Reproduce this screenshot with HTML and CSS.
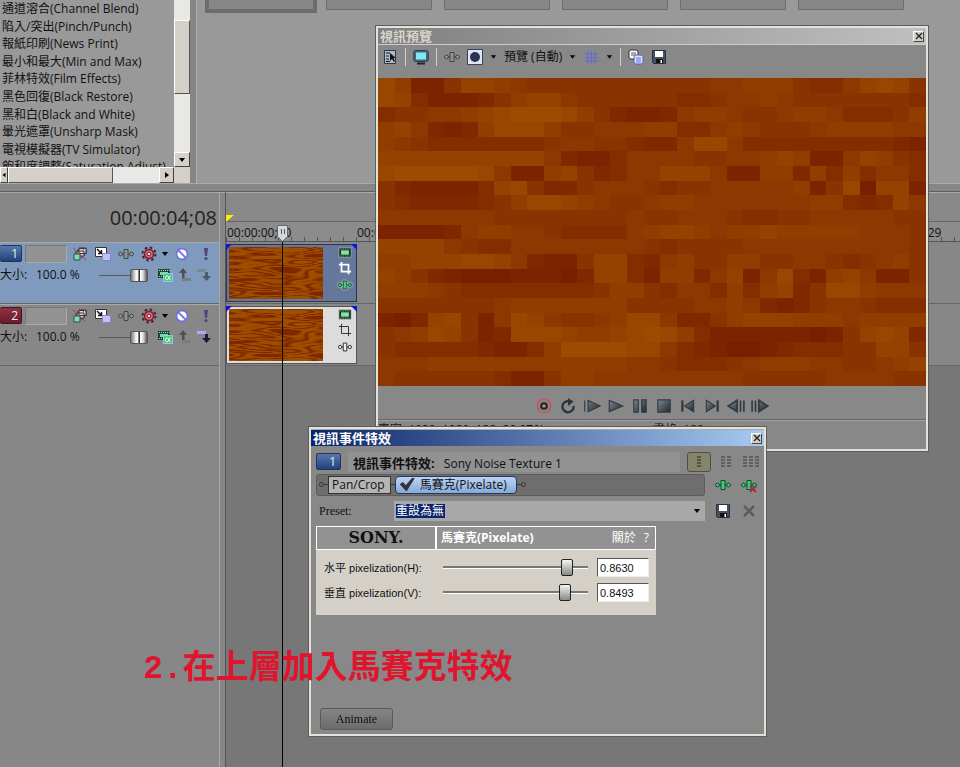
FILE: index.html
```html
<!DOCTYPE html>
<html lang="zh-Hant">
<head>
    <meta charset="UTF-8">
    <meta name="viewport" content="width=device-width, initial-scale=1.0">
    <title>視訊事件特效</title>
    <link rel="stylesheet" href="styles.css">
</head>
<body>
    <!-- Shared icons -->
    <svg class="defs" aria-hidden="true">
        <defs>
            <linearGradient id="dark" x1="0" y1="0" x2="1" y2="1">
                <stop offset="0" stop-color="#7d8791"/>
                <stop offset="1" stop-color="#20262c"/>
            </linearGradient>
            <filter id="wood" x="0" y="0" width="100%" height="100%" color-interpolation-filters="sRGB">
                <feTurbulence type="fractalNoise" baseFrequency="0.025 0.16" numOctaves="1" seed="8"/>
                <feColorMatrix values="3 0 0 0 -1  3 0 0 0 -1  3 0 0 0 -1  0 0 0 0 1"/>
                <feComponentTransfer>
                    <feFuncR type="table" tableValues=".50 .63 .61 .47 .64 .61 .48 .63"/>
                    <feFuncG type="table" tableValues=".16 .31 .29 .14 .32 .29 .15 .31"/>
                    <feFuncB type="table" tableValues="0 0"/>
                </feComponentTransfer>
            </filter>
        </defs>
        <symbol id="i-motion" viewBox="0 0 16 16">
            <path d="M7 2h7v6M5 4h7v6M3 6h7v6" fill="none" stroke="#333" />
            <path d="M7 2.500h7v5h-7zM5 5h7v5h-7z" fill="#d5dbe6" stroke="#333"/>
            <path d="M2 8h6v6h-6z" fill="#7fe0a0" stroke="#346"/>
            <path d="M1 2l13 12M14 1l-3 3" stroke="#b04050" fill="none"/>
        </symbol>
        <symbol id="i-crop-track" viewBox="0 0 16 16">
            <path d="M.5 1.500h11v9h-11z" fill="#fff" stroke="#333"/>
            <path d="M2 3l4 4M6.500 4v3.500H3" stroke="#111" fill="none" stroke-width="1.500"/>
            <path d="M7.500 7.500h8v7h-8z" fill="#c0c0ff" stroke="#88b"/>
        </symbol>
        <symbol id="i-fx" viewBox="0 0 16 16">
            <path d="M4 8h8" stroke="#444"/>
            <circle cx="2.500" cy="8" r="1.900" fill="#999" stroke="#444"/>
            <circle cx="13.500" cy="8" r="1.900" fill="#999" stroke="#444"/>
            <path d="M6 3.500h4v9h-4z" fill="#8b959c" stroke="#444"/>
        </symbol>
        <symbol id="i-gear" viewBox="0 0 16 16">
            <circle cx="8" cy="8" r="6.500" fill="none" stroke="#502028" stroke-width="2" stroke-dasharray="2.500 2.600"/>
            <circle cx="8" cy="8" r="4.500" fill="#e06878" stroke="#702030" stroke-width="1.500"/>
            <circle cx="8" cy="8" r="1.800" fill="#eee" stroke="#702030"/>
        </symbol>
        <symbol id="i-mute" viewBox="0 0 16 16">
            <circle cx="8" cy="8" r="5.500" fill="#fff" stroke="#7075dc" stroke-width="1.800"/>
            <path d="M4 4l8 8" stroke="#7075dc" stroke-width="1.800"/>
        </symbol>
        <symbol id="i-solo" viewBox="0 0 16 16">
            <path d="M6 2h4l-1 8h-2z" fill="#51457c"/>
            <circle cx="8" cy="12.500" r="1.600" fill="#51457c"/>
        </symbol>
        <symbol id="i-comp" viewBox="0 0 16 16">
            <path d="M1 2h12v9H1z" fill="#184a2c"/>
            <path d="M3 5h8v3H3z" fill="#80d8a0"/>
            <path d="M2 3.500h11M2 9.500h6" stroke="#bcd" stroke-dasharray="1 1"/>
            <path d="M6.500 6.500h9v8h-9z" fill="#50c878" stroke="#8cf"/>
            <path d="M13.500 8.500l-2.500 4c-2 1-3-1-2-3s2-.5 2.500 1 .8 2 2 2" fill="none" stroke="#fff"/>
        </symbol>
        <symbol id="i-parent" viewBox="0 0 16 16">
            <path d="M6 1l4 5H7.500v5H5V6H2z" fill="#4c5158"/>
            <path d="M5 11h9v3H5z" fill="#777d84"/>
        </symbol>
        <symbol id="i-child" viewBox="0 0 16 16">
            <path fill="var(--bar)" d="M0 2h9v3H0z"/>
            <path fill="var(--arrow)" d="M8 5h3v4h3l-4.500 5L5 9h3z"/>
        </symbol>
        <symbol id="i-film" viewBox="0 0 16 12">
            <path d="M1 .5h14v11H1z" fill="#153420" stroke="#ccc" stroke-width=".6"/>
            <path d="M3.500 3.500h9v5h-9z" fill="#7fe3a2"/>
            <path d="M2 2h12M2 10h12" stroke="#bbb" stroke-dasharray="1 1"/>
        </symbol>
        <symbol id="i-crop" viewBox="0 0 16 16">
            <path d="M4 1v11h11M1 4h11v11"/>
        </symbol>
        <symbol id="i-evfx" viewBox="0 0 16 16">
            <path d="M1 8h14"/>
            <circle cx="2.500" cy="8" r="1.900"/>
            <circle cx="13.500" cy="8" r="1.900"/>
            <path d="M6 3.500h4v9h-4z"/>
        </symbol>
        <symbol id="i-save" viewBox="0 0 16 16">
            <path d="M1.500 1.500h13v13h-12l-1-1z" fill="#44515f" stroke="#27313b"/>
            <path d="M4 2h8v6H4z" fill="#fff"/>
            <path d="M5 10h7v4H5z" fill="#111"/>
            <path d="M9.500 11h1.500v3h-1.500z" fill="#fff"/>
        </symbol>
        <symbol id="i-x" viewBox="0 0 8 8">
            <path d="M1 1l6 6M7 1l-6 6" stroke="#222" stroke-width="1.400"/>
        </symbol>
        <symbol id="i-down" viewBox="0 0 8 8">
            <path d="M1 2h6l-3 4z"/>
        </symbol>
    </svg>

    <main class="app">
        <section class="browser">
            <div class="fx-list">
                <div class="list-view">
                    <ul>
                        <li>通道溶合(Channel Blend)</li>
                        <li>陷入/突出(Pinch/Punch)</li>
                        <li>報紙印刷(News Print)</li>
                        <li>最小和最大(Min and Max)</li>
                        <li>菲林特效(Film Effects)</li>
                        <li>黑色回復(Black Restore)</li>
                        <li>黑和白(Black and White)</li>
                        <li>暈光遮罩(Unsharp Mask)</li>
                        <li>電視模擬器(TV Simulator)</li>
                        <li>飽和度調整(Saturation Adjust)</li>
                    </ul>
                </div>
                <div class="scroll scroll-v">
                    <span class="thumb"></span>
                    <button class="bevel" aria-label="向下"><svg><use href="#i-down"/></svg></button>
                </div>
                <div class="scroll scroll-h">
                    <button class="bevel left" aria-label="向左"><svg><use href="#i-down"/></svg></button>
                    <span class="thumb"></span>
                    <button class="bevel right" aria-label="向右"><svg><use href="#i-down"/></svg></button>
                </div>
                <div class="corner"></div>
            </div>
            <div class="presets">
                <span class="preset selected"></span>
                <span class="preset"></span>
                <span class="preset"></span>
                <span class="preset"></span>
                <span class="preset"></span>
                <span class="preset"></span>
            </div>
        </section>

        <section class="timeline">
            <div class="track-heads">
                <div class="timecode">00:00:04;08</div>
                <div class="track-head active">
                    <div class="tools">
                        <button class="track-no">1</button>
                        <span class="meter"></span>
                        <svg class="icon"><use href="#i-motion"/></svg>
                        <svg class="icon"><use href="#i-crop-track"/></svg>
                        <svg class="icon"><use href="#i-fx"/></svg>
                        <svg class="icon"><use href="#i-gear"/></svg>
                        <svg class="caret"><use href="#i-down"/></svg>
                        <svg class="icon"><use href="#i-mute"/></svg>
                        <svg class="icon"><use href="#i-solo"/></svg>
                    </div>
                    <div class="level">
                        <label for="size1">大小:</label>
                        <span>100.0 %</span>
                        <input type="range" id="size1" value="100">
                        <svg class="icon"><use href="#i-comp"/></svg>
                        <svg class="icon"><use href="#i-parent"/></svg>
                        <svg class="icon child off"><use href="#i-child"/></svg>
                    </div>
                </div>
                <div class="track-head">
                    <div class="tools">
                        <button class="track-no red">2</button>
                        <span class="meter"></span>
                        <svg class="icon"><use href="#i-motion"/></svg>
                        <svg class="icon"><use href="#i-crop-track"/></svg>
                        <svg class="icon"><use href="#i-fx"/></svg>
                        <svg class="icon"><use href="#i-gear"/></svg>
                        <svg class="caret"><use href="#i-down"/></svg>
                        <svg class="icon"><use href="#i-mute"/></svg>
                        <svg class="icon"><use href="#i-solo"/></svg>
                    </div>
                    <div class="level">
                        <label for="size2">大小:</label>
                        <span>100.0 %</span>
                        <input type="range" id="size2" value="100">
                        <svg class="icon"><use href="#i-comp"/></svg>
                        <svg class="icon"><use href="#i-parent"/></svg>
                        <svg class="icon child"><use href="#i-child"/></svg>
                    </div>
                </div>
            </div>

            <div class="tracks">
                <div class="marker-bar"><span class="marker"></span></div>
                <div class="ruler">
                    <span>00:00:00;00</span>
                    <span>00:00:09;29</span>
                    <span></span>
                    <span></span>
                    <span></span>
                    <span>00:00:49;29</span>
                </div>
                <div class="lane">
                    <div class="clip selected">
                        <svg class="wood"><rect width="100%" height="100%" filter="url(#wood)"/></svg>
                        <div class="clip-icons">
                            <svg class="film"><use href="#i-film"/></svg>
                            <svg class="crop"><use href="#i-crop"/></svg>
                            <svg class="evfx on"><use href="#i-evfx"/></svg>
                        </div>
                    </div>
                </div>
                <div class="lane">
                    <div class="clip">
                        <svg class="wood"><rect width="100%" height="100%" filter="url(#wood)"/></svg>
                        <div class="clip-icons">
                            <svg class="film"><use href="#i-film"/></svg>
                            <svg class="crop"><use href="#i-crop"/></svg>
                            <svg class="evfx"><use href="#i-evfx"/></svg>
                        </div>
                    </div>
                </div>
                <div class="playhead">
                    <svg viewBox="0 0 11 17"><path d="M.5.5h10v11l-5 5-5-5z" fill="#d5d8dc" stroke="#666"/><path d="M4.500 4v5M7.500 4v5" stroke="#555"/></svg>
                </div>
            </div>
        </section>
    </main>

    <!-- Video preview -->
    <section class="window preview">
        <header class="titlebar">
            <h2>視訊預覽</h2>
            <button class="bevel close" aria-label="關閉"><svg><use href="#i-x"/></svg></button>
        </header>
        <div class="toolbar">
            <svg class="icon" viewBox="0 0 16 16"><path d="M2.500 1.500h11v13h-11z" fill="#aebdcc" stroke="#2b3947"/><path d="M4 4h4M4 7h3M4 10h3M4 12.500h4" stroke="#111"/><path d="M8 4v8l2-2 2 3 1-1-1.500-3H14z" fill="#111"/></svg>
            <span class="sep"></span>
            <svg class="icon" viewBox="0 0 16 16"><rect x=".7" y="1.500" width="14.600" height="11" rx="2" fill="#47657c" stroke="#2c4050"/><path d="M3 3.500h10v7H3z" fill="#80e8f0"/><path d="M4 14.500h8" stroke="#222" stroke-width="2"/></svg>
            <span class="sep"></span>
            <svg class="icon"><use href="#i-fx"/></svg>
            <svg class="icon split" viewBox="0 0 16 16"><path d="M.5.5h15v15H.5z" fill="#dfe5f2" stroke="#38445a"/><circle cx="8" cy="8" r="5" fill="#2a3450"/></svg>
            <svg class="caret"><use href="#i-down"/></svg>
            <button class="quality">預覽 (自動)</button>
            <svg class="caret"><use href="#i-down"/></svg>
            <svg class="icon grid" viewBox="0 0 16 16"><path d="M5 2v12M8.500 2v12M12 2v12M2 5h13M2 8.500h13M2 12h13" stroke="#6069d8" fill="none"/></svg>
            <svg class="caret"><use href="#i-down"/></svg>
            <span class="sep"></span>
            <svg class="icon" viewBox="0 0 16 16"><rect x="1" y="1" width="9" height="9" rx="2" fill="#fff" stroke="#333"/><path d="M3 4h5M3 6h5" stroke="#555"/><rect x="6" y="6" width="9" height="9" rx="2" fill="#dfe2ff" stroke="#5560c0"/><path d="M8 9h5M8 11h5M8 13h5" stroke="#6670d0"/></svg>
            <svg class="icon"><use href="#i-save"/></svg>
        </div>
        <canvas id="frame" width="33" height="21"></canvas>
        <div class="transport">
            <button aria-label="錄製"><svg viewBox="0 0 16 16"><circle cx="8" cy="8" r="6" fill="none" stroke="#c25860" stroke-width="1.500"/><circle cx="8" cy="8" r="2.500" fill="#b88" stroke="#222" stroke-width="1.800"/></svg></button>
            <button aria-label="循環"><svg viewBox="0 0 16 16"><path d="M10 4a5 5 0 1 0 3 4" fill="none" stroke="#2c3238" stroke-width="2"/><path d="M8 1l5 3-5 4z" fill="#2c3238"/></svg></button>
            <button aria-label="從頭播放"><svg viewBox="0 0 16 16"><path d="M1.500 3v10M4.500 3v10l11-5z" fill="url(#dark)" stroke="#333a42"/></svg></button>
            <button aria-label="播放"><svg viewBox="0 0 16 16"><path d="M2 3v10l12-5z" fill="url(#dark)" stroke="#333a42"/></svg></button>
            <button aria-label="暫停"><svg viewBox="0 0 16 16"><path d="M2.500 2.500h4v11h-4zM9.500 2.500h4v11h-4z" fill="url(#dark)" stroke="#333a42"/></svg></button>
            <button aria-label="停止"><svg viewBox="0 0 16 16"><path d="M2.500 2.500h11v11h-11z" fill="url(#dark)" stroke="#333a42"/></svg></button>
            <button aria-label="到開頭"><svg viewBox="0 0 16 16"><path d="M3 3v10" stroke="#333a42" stroke-width="2"/><path d="M13 3v10L5 8z" fill="url(#dark)" stroke="#333a42"/></svg></button>
            <button aria-label="到結尾"><svg viewBox="0 0 16 16"><path d="M13 3v10" stroke="#333a42" stroke-width="2"/><path d="M3 3v10l8-5z" fill="url(#dark)" stroke="#333a42"/></svg></button>
            <button aria-label="上一格"><svg viewBox="0 0 16 16"><path d="M9 3v10L1 8zM12 3v10M15 3v10" fill="url(#dark)" stroke="#333a42" stroke-width="1.500"/></svg></button>
            <button aria-label="下一格"><svg viewBox="0 0 16 16"><path d="M7 3v10l8-5zM4 3v10M1 3v10" fill="url(#dark)" stroke="#333a42" stroke-width="1.500"/></svg></button>
        </div>
        <footer class="status">
            <span>專案: 1920x1080x128; 29.970i</span>
            <span>畫格: 128</span>
        </footer>
    </section>

    <!-- Video event FX -->
    <section class="window event-fx">
        <header class="titlebar">
            <h2>視訊事件特效</h2>
            <button class="bevel close" aria-label="關閉"><svg><use href="#i-x"/></svg></button>
        </header>
        <div class="fx-body">
            <div class="fx-row name-row">
                <button class="track-no">1</button>
                <p class="event-name"><b>視訊事件特效:</b> Sony Noise Texture 1</p>
                <button class="cols on" aria-label="單欄"><svg viewBox="0 0 16 14"><path d="M8 1v12" stroke="#565640" stroke-width="4" stroke-dasharray="2 1"/></svg></button>
                <button class="cols" aria-label="雙欄"><svg viewBox="0 0 16 14"><path d="M5 1v12M11 1v12" stroke="#606060" stroke-width="4" stroke-dasharray="2 1"/></svg></button>
                <button class="cols" aria-label="三欄"><svg viewBox="0 0 16 14"><path d="M2 1v12M8 1v12M14 1v12" stroke="#606060" stroke-width="4" stroke-dasharray="2 1"/></svg></button>
            </div>
            <div class="fx-row">
                <div class="chain">
                    <i class="dot"></i><i class="wire"></i>
                    <button class="plug">Pan/Crop</button>
                    <i class="wire"></i>
                    <label class="plug current"><input type="checkbox" checked>馬賽克(Pixelate)</label>
                    <i class="wire"></i><i class="dot"></i>
                </div>
                <svg class="icon evfx on"><use href="#i-evfx"/></svg>
                <svg class="icon evfx on" viewBox="0 0 16 16"><use href="#i-evfx" width="16" height="16"/><path d="M9 9l6 6M15 9l-6 6" stroke="#a03040" stroke-width="2"/></svg>
            </div>
            <div class="fx-row preset-row">
                <div class="preset-field">
                    <label for="preset">Preset:</label>
                    <div class="combo">
                        <select id="preset"><option>重設為無</option></select>
                        <svg class="caret"><use href="#i-down"/></svg>
                    </div>
                </div>
                <svg class="icon"><use href="#i-save"/></svg>
                <svg class="icon" viewBox="0 0 16 16"><path d="M3 3l10 10M13 3L3 13" stroke="#5c5c5c" stroke-width="2.500"/></svg>
            </div>

            <div class="plugin">
                <div class="plugin-head">
                    <strong class="brand">SONY.</strong>
                    <div class="plugin-title">
                        <h3>馬賽克(Pixelate)</h3>
                        <a href="#about">關於</a>
                        <a href="#help">?</a>
                    </div>
                </div>
                <div class="param">
                    <label for="ph">水平 pixelization(H):</label>
                    <input type="range" id="ph" min="0" max="1" step="0.0001" value="0.89">
                    <input type="text" value="0.8630" aria-label="水平">
                </div>
                <div class="param">
                    <label for="pv">垂直 pixelization(V):</label>
                    <input type="range" id="pv" min="0" max="1" step="0.0001" value="0.875">
                    <input type="text" value="0.8493" aria-label="垂直">
                </div>
            </div>

            <button class="animate">Animate</button>
        </div>
    </section>

    <p class="caption">2.在上層加入馬賽克特效</p>

    <script src="script.js"></script>
</body>
</html>
```
FILE: styles.css
```css
* {
    margin: 0;
    padding: 0;
    box-sizing: border-box;
}

body {
    position: relative;
    min-height: 100vh;
    background: #878787;
    color: #111;
    font-family: "Open Sans", "Noto Sans CJK TC", sans-serif;
    font-size: 12px;
    line-height: 16px;
    overflow: hidden;
}

button,
input,
select {
    font: inherit;
    color: inherit;
}

button {
    border: none;
    background: none;
}

svg {
    display: block;
}

.defs {
    position: absolute;
    width: 0;
    height: 0;
}

.icon {
    width: 16px;
    height: 16px;
    flex: none;
}

.caret {
    width: 8px;
    height: 8px;
    flex: none;
}

.bevel {
    display: flex;
    align-items: center;
    justify-content: center;
    background: #d4d0c8;
    border: 1px solid;
    border-color: #fff #444 #444 #fff;
}

.bevel svg {
    width: 8px;
    height: 8px;
}

.app {
    display: flex;
    flex-direction: column;
    min-height: 100vh;
}

/* Effects browser */
.browser {
    display: flex;
    gap: 6px;
    height: 184px;
    background: #858585;
    border-bottom: 1px solid #aaa;
}

.fx-list {
    display: grid;
    grid-template-columns: 174px 16px;
    grid-template-rows: 167px 16px;
    background: #999;
}

.list-view {
    overflow: hidden;
}

.list-view ul {
    display: grid;
    grid-auto-rows: 1fr;
    height: 177px;
    padding: 1px 0 0 2px;
    list-style: none;
    white-space: nowrap;
}

.scroll {
    display: flex;
    background: #e9e8e4;
}

.scroll .thumb {
    background: #d4d0c8;
    border: 1px solid;
    border-color: #fff #555 #555 #fff;
}

.scroll-v {
    flex-direction: column;
    justify-content: space-between;
}

.scroll-v .thumb {
    height: 74px;
    margin-top: 20px;
}

.scroll-v .bevel {
    height: 15px;
}

.scroll-h .thumb {
    width: 105px;
}

.scroll-h .bevel {
    width: 15px;
}

.scroll-h .left {
    width: 8px;
}

.scroll-h .right {
    margin-left: auto;
}

.left svg {
    transform: rotate(90deg);
}

.right svg {
    transform: rotate(-90deg);
}

.corner {
    background: #d4d0c8;
}

.presets {
    display: flex;
    flex: 1;
    gap: 12px;
    padding-left: 11px;
    background: #999;
    border-left: 1px solid #b0b0b0;
}

.preset {
    width: 106px;
    height: 10px;
    background: #878787;
    border: 1px solid #6e6e6e;
    border-top: none;
}

.preset.selected {
    outline: 3px solid #6c6c6c;
}

/* Timeline */
.timeline {
    display: flex;
    flex: 1;
    margin-top: 7px;
    border-top: 1px solid #5f5f5f;
    box-shadow: inset 0 1px #a8a8a8;
}

.track-heads {
    flex: none;
    width: 220px;
    margin-right: 5px;
    border-right: 1px solid #a8a8a8;
}

.timecode {
    height: 50px;
    padding: 15px 2px 0 0;
    color: #222;
    font-size: 20px;
    line-height: 22px;
    text-align: right;
}

.track-head {
    height: 62px;
    border-top: 1px solid #aaa;
    border-bottom: 1px solid #666;
}

.track-head.active {
    background: #7f9abd;
}

.tools {
    display: grid;
    grid-template-columns: 24px 44px 23px 23px 24px 22px 9px 26px 22px;
    justify-items: center;
    align-items: center;
    height: 21px;
}

.track-no {
    width: 22px;
    height: 17px;
    padding-right: 3px;
    background: linear-gradient(#5878ac, #24407c);
    border: 1px solid #20345c;
    border-radius: 2px;
    color: #eee;
    line-height: 15px;
    text-align: right;
}

.tools .track-no {
    justify-self: start;
    border-left: none;
}

.track-no.red {
    background: linear-gradient(#8c3240, #6a1c2a);
    border-color: #40141c;
}

.meter {
    width: 42px;
    height: 18px;
    background: #929292;
    border: 1px solid;
    border-color: #777 #aaa #aaa #777;
}

.level {
    display: grid;
    grid-template-columns: 36px 63px 49px 7px 20px 20px 20px;
    align-items: center;
    height: 22px;
}

.level .icon {
    justify-self: center;
}

.level input + .icon {
    grid-column: 5;
}

.child {
    --bar: #a9a9ff;
    --arrow: #1b1b36;
}

.child.off {
    --bar: #788593;
    --arrow: #4e5a68;
}

input[type="range"] {
    appearance: none;
    width: 100%;
    height: 18px;
    background: linear-gradient(#5a5a5a, #5a5a5a) center / 100% 1px no-repeat;
}

input[type="range"]::-webkit-slider-thumb {
    appearance: none;
    width: 18px;
    height: 13px;
    background: linear-gradient(90deg, #777, #eee 30%, #fff 45%, #333 48%, #333 54%, #fff 58%, #ddd 75%, #555);
    border: 1px solid #555;
    border-radius: 2px;
}

.tracks {
    position: relative;
    flex: 1;
    min-width: 0;
    background: #777;
    border-left: 1px solid #555;
}

.marker-bar {
    height: 30px;
    padding-top: 22px;
    background: #888;
    border-bottom: 1px solid #666;
    border-top: 1px solid #a8a8a8;
}

.marker {
    display: block;
    width: 8px;
    height: 7px;
    background: #ffee00;
    clip-path: polygon(0 0, 100% 0, 0 100%);
}

.ruler {
    display: grid;
    grid-template-columns: repeat(6, 130px);
    height: 20px;
    padding: 3px 0 0 1px;
    overflow: hidden;
    background: repeating-linear-gradient(90deg, #555 0 1px, transparent 1px 13px) bottom / 100% 4px no-repeat, #8c8c8c;
    border-bottom: 1px solid #555;
    line-height: 15px;
}

.lane {
    height: 62px;
    padding-top: 2px;
    background: #878787;
    border-bottom: 1px solid #666;
}

.clip {
    display: flex;
    position: relative;
    gap: 14px;
    width: 131px;
    height: 58px;
    padding: 2px;
    background: #dcdcdc;
    border: 1px solid #555;
}

.clip.selected {
    background: #66779c;
    border-color: #2c3550;
}

.clip::before,
.clip::after {
    content: "";
    position: absolute;
    top: -1px;
    width: 6px;
    height: 6px;
    background: #1010e0;
}

.clip::before {
    left: -1px;
    clip-path: polygon(0 0, 100% 0, 0 100%);
}

.clip::after {
    right: -1px;
    clip-path: polygon(0 0, 100% 0, 100% 100%);
}

.wood {
    width: 94px;
    height: 52px;
}

.clip-icons {
    display: flex;
    flex-direction: column;
    align-items: center;
    gap: 3px;
    width: 16px;
}

.film {
    width: 14px;
    height: 11px;
    flex: none;
}

.crop,
.clip-icons .evfx {
    width: 14px;
    height: 14px;
    flex: none;
}

.crop,
.evfx {
    stroke: #222;
    fill: #eee;
}

.crop {
    fill: none;
}

.selected .crop {
    stroke: #fff;
    stroke-width: 2px;
}

.evfx.on {
    stroke: #0d4f2b;
    fill: #3fcc7c;
}

.selected .evfx {
    filter: drop-shadow(0 0 1px #fff);
}

.playhead {
    position: absolute;
    top: 33px;
    bottom: 0;
    left: 51px;
    width: 11px;
    background: linear-gradient(#000, #000) center / 1px 100% no-repeat;
}

.playhead svg {
    width: 11px;
    height: 17px;
}

/* Floating windows */
.window {
    position: absolute;
    background: #888;
    border: 2px solid #e4e1d8;
    outline: 1px solid #5d5d5d;
}

.titlebar {
    display: flex;
    align-items: center;
    justify-content: space-between;
    height: 17px;
    padding: 0 2px;
}

.titlebar h2 {
    font-size: 13px;
    line-height: 16px;
}

.close {
    width: 11px;
    height: 11px;
}

.preview {
    top: 26px;
    left: 376px;
    width: 552px;
    height: 425px;
}

.preview .titlebar {
    background: linear-gradient(90deg, #808080, #c0c0c0);
    border-bottom: 1px solid #ccc;
    color: #d8d4cc;
}

.toolbar {
    display: flex;
    align-items: center;
    gap: 7px;
    height: 33px;
    padding: 0 0 9px 4px;
}

.toolbar .caret {
    width: 7px;
}

.sep {
    width: 1px;
    height: 18px;
    background: #d0d0d0;
}

.quality {
    line-height: 16px;
    white-space: nowrap;
}

#frame {
    display: block;
    width: 100%;
    height: 308px;
    image-rendering: pixelated;
}

.transport {
    display: flex;
    align-items: center;
    justify-content: center;
    gap: 6px;
    height: 34px;
    padding-top: 7px;
    border-bottom: 1px solid #666;
}

.transport svg {
    width: 18px;
    height: 18px;
}

.status {
    display: grid;
    grid-template-columns: 275px 1fr;
    height: 29px;
    padding-top: 1px;
    border-top: 1px solid #a0a0a0;
}

.event-fx {
    top: 427px;
    left: 309px;
    width: 457px;
    height: 309px;
}

.event-fx .titlebar {
    background: linear-gradient(90deg, #0a246a, #a6caf0);
    border-top: 1px solid #aaa;
    color: #fff;
}

.fx-body {
    padding: 4px 5px 0;
}

.fx-row {
    display: grid;
    grid-template-columns: 389px 16px 16px;
    column-gap: 10px;
    align-items: center;
    height: 23px;
}

.name-row {
    grid-template-columns: 25px 332px 24px 16px 20px;
    column-gap: 7px;
}

.name-row .track-no {
    width: 25px;
    padding-right: 4px;
}

.event-name {
    height: 20px;
    padding: 3px 5px 0;
    background: #929292;
    white-space: nowrap;
}

.event-name b {
    margin-right: 6px;
    font-size: 13px;
}

.cols svg {
    width: 16px;
    height: 14px;
    margin: 0 auto;
}

.cols.on {
    height: 20px;
    background: #85856a;
    border: 1px solid #4f4f40;
    border-radius: 3px;
}

.chain {
    display: flex;
    align-items: center;
    height: 22px;
    padding-left: 2px;
    background: #6e6e6e;
    border: 1px solid #5c5c5c;
    border-radius: 3px;
}

.dot {
    width: 5px;
    height: 5px;
    border: 1px solid #333;
    border-radius: 50%;
}

.wire {
    width: 4px;
    height: 1px;
    background: #333;
}

.plug {
    height: 18px;
    padding: 0 5px 0 3px;
    background: #b4b4b4;
    border: 1px solid #333;
    line-height: 16px;
    white-space: nowrap;
}

.plug.current {
    display: flex;
    align-items: center;
    gap: 5px;
    padding: 0 9px 0 4px;
    background: linear-gradient(#bcd4f4, #86aad8);
    border-color: #24375c;
    border-radius: 4px;
}

.plug input {
    appearance: none;
    width: 15px;
    height: 14px;
    background: #333;
    clip-path: polygon(0 48%, 22% 32%, 40% 56%, 85% 0, 100% 8%, 45% 100%);
}

.preset-row {
    height: 30px;
}

.preset-field {
    display: flex;
    align-items: center;
}

.preset-field label {
    width: 78px;
    padding-left: 3px;
}

.preset-field label,
.animate {
    font-family: "Liberation Serif", serif;
}

.combo {
    display: flex;
    flex: 1;
    align-items: center;
    height: 20px;
    padding: 0 4px 0 2px;
    background: #a9a9a9;
}

.combo select {
    appearance: none;
    flex: 1;
    border: none;
    background: linear-gradient(#0a246a, #0a246a) left center / 49px 14px no-repeat;
    color: #fff;
}

.plugin {
    width: 340px;
    height: 89px;
    background: #d4d0c8;
}

.plugin-head {
    display: grid;
    grid-template-columns: 118px 1fr;
    gap: 2px;
    height: 24px;
    margin-bottom: 5px;
    padding: 1px;
    background: #fff;
}

.plugin-head > * {
    background: #929292;
}

.brand {
    font-family: "DejaVu Serif", serif;
    font-size: 16px;
    line-height: 22px;
    text-align: center;
}

.plugin-title {
    display: flex;
    align-items: center;
    gap: 8px;
    padding: 0 6px 0 4px;
    color: #fff;
}

.plugin-title h3 {
    flex: 1;
    font-size: 12px;
}

.plugin-title a {
    color: #fff;
    text-decoration: none;
}

.param {
    display: grid;
    grid-template-columns: 110px 145px 52px;
    align-items: center;
    column-gap: 9px;
    height: 25px;
    padding-left: 8px;
    white-space: nowrap;
}

.param label,
.param input {
    font-family: "Liberation Sans", "Noto Sans CJK TC", sans-serif;
    font-size: 11px;
}

.param input[type="range"] {
    background: linear-gradient(#777 0 2px, #fff 2px) center / 100% 3px no-repeat;
}

.param input[type="range"]::-webkit-slider-thumb {
    width: 12px;
    height: 17px;
    background: linear-gradient(#f4f4f4, #888);
    border: 1px solid #222;
}

.param input[type="text"] {
    width: 52px;
    height: 19px;
    padding-left: 2px;
    background: #fff;
    border: 1px solid;
    border-color: #555 #eee #eee #555;
}

.animate {
    display: block;
    width: 73px;
    height: 22px;
    margin: 93px 0 0 4px;
    background: linear-gradient(#858585, #6c6c6c);
    border: 1px solid #5a5a5a;
    border-radius: 3px;
}

.caption {
    position: absolute;
    top: 652px;
    left: 143px;
    color: #e0142c;
    font-family: "Liberation Mono", "Noto Sans CJK TC", monospace;
    font-size: 33px;
    font-weight: 600;
    line-height: 36px;
    white-space: nowrap;
}
```
FILE: script.js
```js
// Brightness of each mosaic block, 0 = darkest, 9 = lightest
const rows = [
    '861147765444444444445566643357874',
    '873111246775444444334556544444443',
    '344556789998642112566544566533346',
    '675212688864455566335654445666655',
    '654333333345544322588533333333321',
    '777777777752113555544556761157643',
    '899999851167423557775116626363553',
    '421111378422455543445555561480771',
    '432222346887654456655555556632375',
    '555555544444444544555433445555544',
    '111125665543333567765667666665554',
    '777754335555555543444455555555554',
    '667778875211477325644664455434564',
    '764210001110277316625715831675114',
    '666543333333346643553636724886555',
    '444444456666666444455652124554333',
    '102784158754456885224677766656666',
    '456874128887667898631111110147872',
    '433333211369999885321001233344774',
    '555666666666666554333456665544567',
    '544444431146655555555544444555544'
];

const ctx = document.getElementById('frame').getContext('2d');

rows.forEach((row, y) => {
    [...row].forEach((level, x) => {
        const r = 120 + level * 4;
        const g = 31 + level * 5;
        ctx.fillStyle = `rgb(${r}, ${g}, 0)`;
        ctx.fillRect(x, y, 1, 1);
    });
});
```
